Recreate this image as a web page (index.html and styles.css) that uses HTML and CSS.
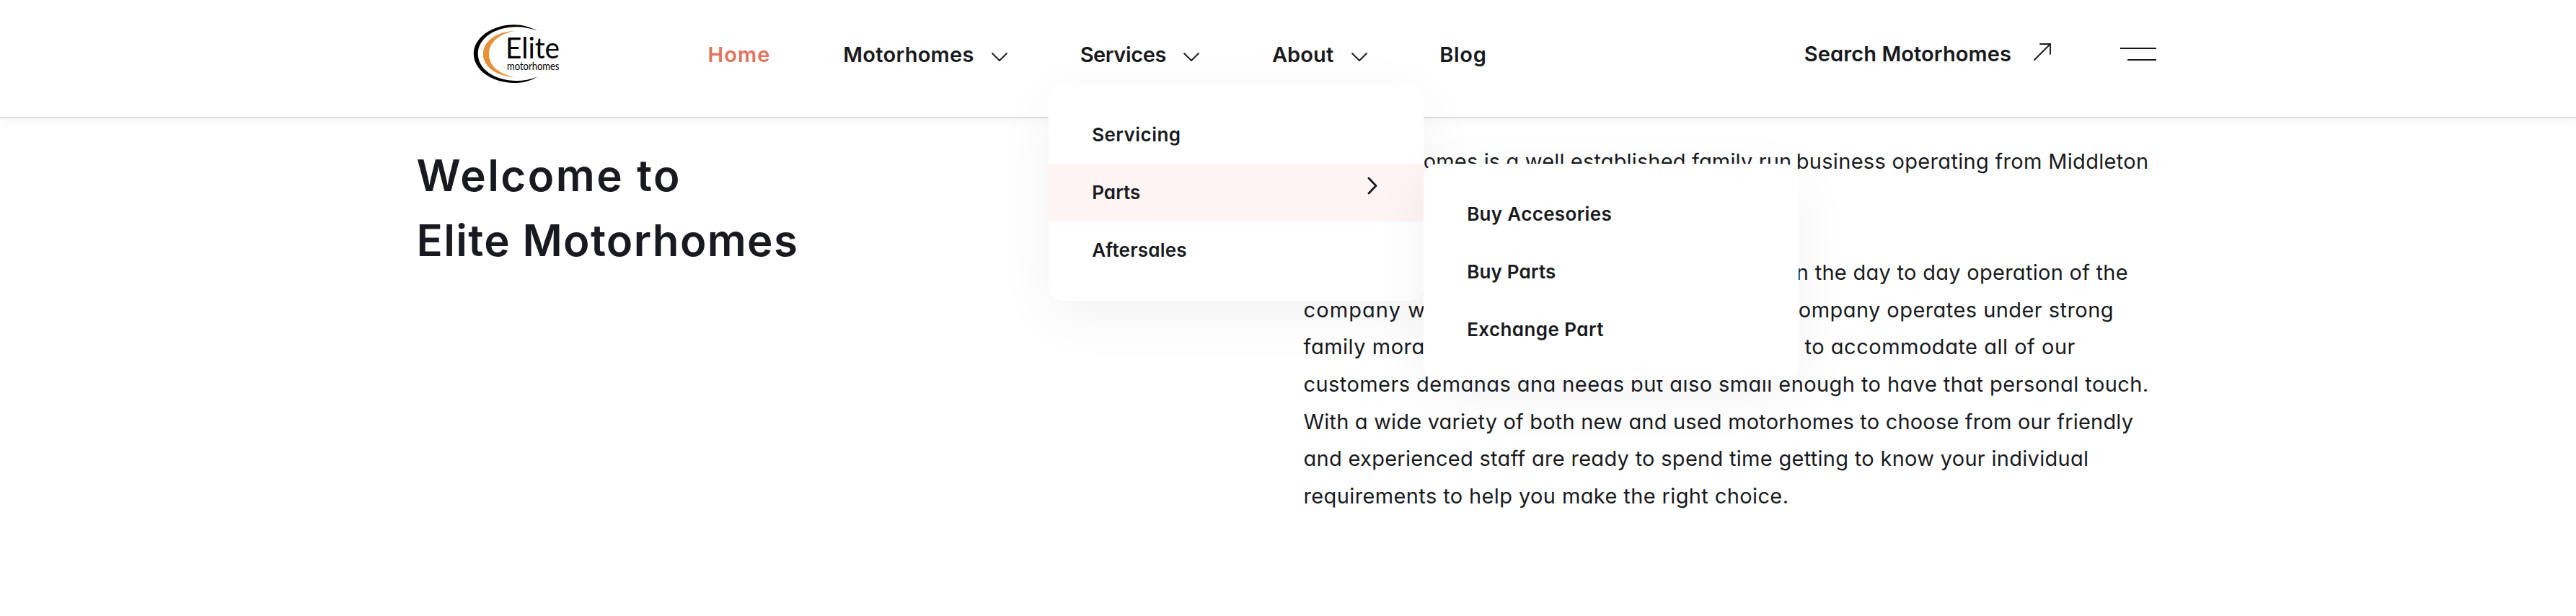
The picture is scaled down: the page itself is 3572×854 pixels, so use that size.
FILE: index.html
```html
<!DOCTYPE html>
<html lang="en">
<head>
<meta charset="utf-8">
<title>Elite Motorhomes</title>
<link rel="stylesheet" href="styles.css">
</head>
<body>
<header class="header">
  <a class="logo">
    <svg width="120" height="84" viewBox="0 0 120 84" role="img" aria-label="Elite motorhomes">
      <path fill="#000" d="M89 10.8C79 5.200 69 2.200 57 2.200C26 2.200 .8 20.300 .8 42.600C.8 65 26 83 57 83C69 83 79 80.300 89 74.700C79 78.300 70 80 60 80C30 80 6.700 64 6.700 42.600C6.700 21.500 30 5.300 60 5.300C70 5.300 79 7.200 89 10.8Z"/>
      <path fill="#e88f37" d="M58 11.100C34 11.500 13.800 25 13.800 43C13.800 61 34 74.300 58 74.700C37 71.500 22 59.500 22 43C22 26.500 37 14.300 58 11.100Z"/>
      <text class="logo-name" x="45" y="48.700" textLength="75" lengthAdjust="spacingAndGlyphs">Elite</text>
      <text class="logo-sub" x="47" y="65" textLength="72.500" lengthAdjust="spacingAndGlyphs">motorhomes</text>
    </svg>
  </a>
  <ul class="nav">
    <li class="nav-item nav-home">Home</li>
    <li class="nav-item nav-motorhomes">Motorhomes<svg class="caret" viewBox="0 0 22 12"><path d="M1 1L11 11L21 1"/></svg></li>
    <li class="nav-item nav-services">Services<svg class="caret" viewBox="0 0 22 12"><path d="M1 1L11 11L21 1"/></svg>
      <ul class="menu menu-services">
        <li class="menu-item servicing">Servicing</li>
        <li class="menu-item parts active">Parts
          <svg class="chevron" viewBox="0 0 14 25"><path d="M2 2L12 12.500L2 23"/></svg>
          <ul class="menu menu-parts">
            <li class="menu-item accessories">Buy Accesories</li>
            <li class="menu-item buy-parts">Buy Parts</li>
            <li class="menu-item exchange">Exchange Part</li>
          </ul>
        </li>
        <li class="menu-item aftersales">Aftersales</li>
      </ul>
    </li>
    <li class="nav-item nav-about">About<svg class="caret" viewBox="0 0 22 12"><path d="M1 1L11 11L21 1"/></svg></li>
    <li class="nav-item nav-blog">Blog</li>
  </ul>
  <div class="actions">
    <a class="search">Search Motorhomes</a>
    <svg class="arrow" viewBox="0 0 24 24"><path d="M1 23L23 1M9 1H23V15"/></svg>
    <div class="burger"><span class="bar"></span><span class="bar short"></span></div>
  </div>
</header>
<main class="content">
  <h1 class="title"><span class="title-a">Welcome to</span><span class="title-b">Elite Motorhomes</span></h1>
  <div class="copy">
    <p class="line l1"><span class="l1-a">Elite Motorhomes is a well established family run</span><span class="l1-b">business operating from Middleton</span></p>
    <p class="line">&nbsp;</p>
    <p class="line">&nbsp;</p>
    <p class="line l4">in the day to day operation of the</p>
    <p class="line l5"><span class="l5-a">company with</span><span>company operates under strong</span></p>
    <p class="line l6"><span>family morals</span><span>to accommodate all of our</span></p>
    <p class="line l7">customers demands and needs but also small enough to have that personal touch.</p>
    <p class="line l8">With a wide variety of both new and used motorhomes to choose from our friendly</p>
    <p class="line l9">and experienced staff are ready to spend time getting to know your individual</p>
    <p class="line l10">requirements to help you make the right choice.</p>
  </div>
</main>
</body>
</html>
```
FILE: styles.css
```css
* { box-sizing: border-box; }
body {
  margin: 0;
  min-height: 854px;
  background: #fff;
  color: #191a20;
  font-family: Inter, "Open Sans", sans-serif;
  font-feature-settings: "cv11";
  overflow-x: hidden;
}
ul { list-style: none; margin: 0; padding: 0; }
h1, p { margin: 0; }

.header {
  position: relative;
  z-index: 2;
  display: flex;
  align-items: flex-start;
  height: 164px;
  padding: 0 582px 0 656px;
  background: #fff;
  border-bottom: 2px solid #dcdcdc;
  box-shadow: 0 4px 12px rgba(0, 0, 0, .035);
}
.logo { display: block; height: 84px; margin-top: 32px; }
.logo svg { display: block; overflow: visible; }
.logo-name { font: 400 40.500px Lato, sans-serif; }
.logo-sub { font: 400 16px Lato, sans-serif; }

.nav { display: flex; gap: 100.700px; margin: 56px 0 0 205.500px; }
.nav-item {
  position: relative;
  display: flex;
  align-items: center;
  height: 40px;
  font-size: 29px;
  font-weight: 600;
  line-height: 40px;
  white-space: nowrap;
}
.nav-home { color: #e0735d; letter-spacing: 1.135px; }
.nav-motorhomes { letter-spacing: .276px; }
.nav-services { letter-spacing: -.41px; }
.nav-about { letter-spacing: .11px; }
.nav-blog { letter-spacing: .665px; }
.caret { width: 22px; height: 12px; margin: 5px 0 0 24.300px; }
.caret path, .chevron path, .arrow path {
  fill: none;
  stroke: #191a20;
  stroke-width: 1.9;
  stroke-linecap: round;
}

.menu {
  position: absolute;
  width: 520px;
  padding: 30px 0;
  background: #fff;
  border-radius: 20px;
  box-shadow: 0 20px 80px rgba(9, 13, 28, .055);
}
.menu-services { top: 61px; left: -43.500px; }
.menu-parts { top: 0; left: 100%; }
.menu-item {
  position: relative;
  display: flex;
  justify-content: space-between;
  height: 80px;
  padding: 0 64px 0 60px;
  font-size: 26px;
  font-weight: 600;
  line-height: 80px;
}
.active { background: #fef4f3; }
.servicing { letter-spacing: .47px; }
.parts { letter-spacing: .11px; }
.aftersales { letter-spacing: .22px; }
.accessories { letter-spacing: .33px; }
.buy-parts { letter-spacing: .19px; }
.exchange { letter-spacing: .42px; }
.chevron { width: 14px; height: 25px; margin-top: 18px; }
.chevron path { stroke-width: 2.800; stroke-linejoin: round; }

.actions { display: flex; margin: 54px 0 0 auto; }
.search { font-size: 29px; font-weight: 600; line-height: 41px; letter-spacing: .1px; white-space: nowrap; }
.arrow { width: 24px; height: 24px; margin: 6px 0 0 31px; }
.burger { display: flex; flex-direction: column; align-items: flex-end; gap: 14px; margin: 12px 0 0 96px; }
.bar { width: 50px; height: 2px; background: #191a20; }
.short { width: 40px; }

.content { display: grid; grid-template-columns: 1230px 1fr; padding: 33.500px 0 0 577.500px; }
.title { display: flex; flex-direction: column; font-size: 60px; font-weight: 600; line-height: 90px; }
.title-a { letter-spacing: 2.490px; }
.title-b { letter-spacing: 1.330px; }
.copy { font-size: 29px; line-height: 51.600px; }
.line { display: flex; justify-content: space-between; height: 51.600px; white-space: nowrap; letter-spacing: .4px; }
.l1 { width: 1172px; }
.l1-a { letter-spacing: .15px; }
.l1-b { letter-spacing: .315px; }
.l4 { justify-content: flex-end; width: 1143.500px; letter-spacing: .28px; }
.l5 { width: 1123.500px; letter-spacing: .44px; }
.l5-a { letter-spacing: 1.1px; }
.l6 { width: 1070.500px; letter-spacing: .51px; }
.l7 { letter-spacing: .43px; }
.l8 { letter-spacing: .19px; }
.l9 { letter-spacing: .29px; }
.l10 { letter-spacing: .38px; }
```
